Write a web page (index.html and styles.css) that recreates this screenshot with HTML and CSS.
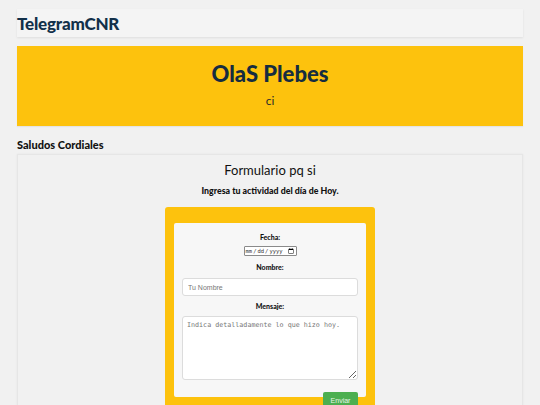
FILE: index.html
```html
<!DOCTYPE html>
<html lang="es">
<head>
<meta charset="utf-8">
<title>TelegramCNR</title>
<link rel="stylesheet" href="styles.css">
</head>
<body>
<div class="page">
  <header class="topbar">
    <h1 class="brand">TelegramCNR</h1>
  </header>
  <section class="hero">
    <h2 class="hero-title">OlaS Plebes</h2>
    <p class="hero-sub">ci</p>
  </section>
  <h3 class="section-title">Saludos Cordiales</h3>
  <section class="card">
    <h4 class="card-title">Formulario pq si</h4>
    <p class="card-lead">Ingresa tu actividad del día de Hoy.</p>
    <div class="form-frame">
      <form class="form-box">
        <label class="lbl" for="fecha">Fecha:</label>
        <input class="date" id="fecha" type="date">
        <label class="lbl" for="nombre">Nombre:</label>
        <input class="text" id="nombre" type="text" placeholder="Tu Nombre">
        <label class="lbl" for="msg">Mensaje:</label>
        <textarea class="area" id="msg" placeholder="Indica detalladamente lo que hizo hoy."></textarea>
        <div class="actions"><button class="btn" type="button">Enviar</button></div>
      </form>
    </div>
  </section>
</div>
</body>
</html>
```

FILE: styles.css
```css
html, body {
  margin: 0;
  padding: 0;
  background: #f1f1f1;
  overflow: hidden;
}
body {
  font-family: Lato, "Noto Sans", sans-serif;
  color: #12304a;
}
.page {
  padding: 9px 17px 0 17px;
}
.topbar {
  background: #f4f4f4;
  height: 28px;
  display: flex;
  align-items: center;
  box-shadow: 0 1px 2px rgba(0,0,0,0.08);
}
.brand {
  margin: 0;
  font-size: 17px;
  font-weight: 900;
  color: #12304a;
  letter-spacing: -0.2px;
}
.hero {
  margin-top: 9px;
  background: #fdc20d;
  height: 80px;
  display: flex;
  flex-direction: column;
  align-items: center;
  box-shadow: 0 1px 1px rgba(0,0,0,0.05);
}
.hero-title {
  margin: 13px 0 0;
  font-size: 22px;
  font-weight: 900;
  color: #152c40;
  line-height: 30px;
}
.hero-sub {
  margin: 4px 0 0;
  font-size: 12px;
  color: #2a2a2a;
  line-height: 16px;
}
.section-title {
  margin: 12px 0 0;
  font-size: 11px;
  font-weight: 900;
  color: #111;
  line-height: 14px;
}
.card {
  margin-top: 2px;
  background: #f1f1f1;
  border-top: 1px solid #e6e6e6;
  border-right: 1px solid #e6e6e6;
  border-left: 1px solid #e6e6e6;
  box-shadow: 0 0 2px rgba(0,0,0,0.06);
  display: flex;
  flex-direction: column;
  align-items: center;
  height: 300px;
}
.card-title {
  margin: 6px 0 0;
  font-size: 13px;
  font-weight: 400;
  color: #111;
  line-height: 18px;
}
.card-lead {
  margin: 6px 0 0;
  font-size: 8.8px;
  font-weight: 900;
  color: #111;
  line-height: 12px;
}
.form-frame {
  margin-top: 10px;
  width: 210px;
  background: #fdc20d;
  border-radius: 3px;
  padding: 16px 9px 20px 9px;
  box-sizing: border-box;
}
.form-box {
  background: #f7f7f7;
  border-radius: 2px;
  height: 174px;
  padding: 10px 8px 0 8px;
  box-sizing: border-box;
  display: flex;
  flex-direction: column;
  align-items: center;
}
.form-box > * {
  flex-shrink: 0;
}
.lbl {
  font-size: 7px;
  font-weight: 900;
  color: #111;
  line-height: 9px;
}
.date {
  margin-top: 4px;
  width: 53px;
  height: 10px;
  box-sizing: border-box;
  font-family: "DejaVu Sans Mono", monospace;
  font-size: 5.5px;
  padding: 0;
  border: 1px solid #8a8a8a;
  border-radius: 1px;
  background: #fff;
  color: #333;
}
.date + .lbl {
  margin-top: 7px;
}
.text {
  margin-top: 6px;
  width: 100%;
  height: 18px;
  box-sizing: border-box;
  border: 1px solid #dcdcdc;
  border-radius: 3px;
  background: #fff;
  font-family: "Liberation Sans", Arial, sans-serif;
  font-size: 7px;
  padding: 0 5px;
}
.text::placeholder {
  color: #777;
}
.text + .lbl {
  margin-top: 6px;
}
.area {
  margin-top: 5px;
  width: 100%;
  height: 64px;
  box-sizing: border-box;
  border: 1px solid #dcdcdc;
  border-radius: 3px;
  background: #fff;
  font-family: "DejaVu Sans Mono", monospace;
  font-size: 6.7px;
  padding: 4px 4px;
  resize: vertical;
}
.area::placeholder {
  color: #777;
}
.actions {
  width: 100%;
  display: flex;
  justify-content: flex-end;
  margin-top: 12px;
}
.btn {
  background: #4caf50;
  color: #e8f5e8;
  border: none;
  border-radius: 2px;
  font-family: "Liberation Sans", Arial, sans-serif;
  font-size: 7px;
  width: 35px;
  height: 17px;
  padding: 0;
}
```
